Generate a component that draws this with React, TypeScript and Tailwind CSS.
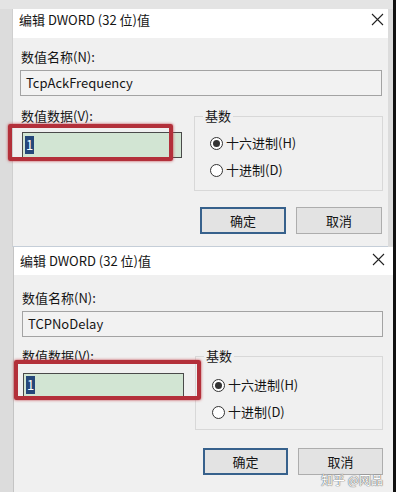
import React from "react";

function CloseX() {
  return (
    <svg width="13" height="13" viewBox="0 0 13 13" className="block">
      <path d="M1 1 L12 12 M12 1 L1 12" stroke="#222" strokeWidth="1.1" fill="none" />
    </svg>
  );
}

function Radio({ checked, label }: { checked?: boolean; label: string }) {
  return (
    <div className="flex items-center h-[20px]">
      <div className="w-[13px] h-[13px] rounded-full border border-[#333] bg-white flex items-center justify-center shrink-0">
        {checked && <div className="w-[7px] h-[7px] rounded-full bg-[#333]" />}
      </div>
      <span className="ml-[3px] leading-[20px]">{label}</span>
    </div>
  );
}

export default function App() {
  return (
    <div className="w-[396px] h-[492px] overflow-hidden bg-[#dcdcdc] flex font-['Noto_Sans_CJK_SC','Noto_Sans',sans-serif] text-[13px] text-[#151515]">
      <div className="flex-1 flex flex-col">
        <div className="h-[9px] shrink-0 bg-[#e4e4e4]" />

        {/* Dialog 1 */}
        <div className="relative ml-[12px] w-[376px] h-[238px] shrink-0 bg-[#f0f0f0] flex flex-col border-l border-[#cfcfcf] border-b border-b-[#c5ced8]">
          <div className="h-[29px] bg-white flex items-start justify-between pl-[6px] pr-[4px] shrink-0">
            <span className="leading-[20px] pt-[1px]">编辑 DWORD (32 位)值</span>
            <div className="pt-[4px]"><CloseX /></div>
          </div>
          <div className="pl-[8px] pt-[9px] leading-[20px]">数值名称(N):</div>
          <div className="mt-[3px] ml-[7px] w-[362px] h-[26px] border border-[#a3a3a3] bg-[#f2f2f2] flex items-center pl-[5px]">
            TcpAckFrequency
          </div>
          <div className="mt-[10px] flex">
            <div className="ml-[8px] w-[161px] flex flex-col">
              <div className="leading-[20px]">数值数据(V):</div>
              <div className="mt-[6px] ml-[1px] w-[160px] h-[26px] border border-[#4a4a4a] bg-[#d2e5d3] flex items-center pl-[2px]">
                <span className="bg-[#25477a] text-white leading-[18px] px-[1px]">1</span>
              </div>
            </div>
            <fieldset className="ml-[12px] w-[189px] h-[85px] border border-[#d8d8d8] pl-[15px]">
              <legend className="ml-[-7px] px-[2px] leading-[20px]">基数</legend>
              <div className="mt-[7px] flex flex-col gap-[7px]">
                <Radio checked label="十六进制(H)" />
                <Radio label="十进制(D)" />
              </div>
            </fieldset>
          </div>
          <div className="mt-[16px] flex justify-end gap-[10px] pr-[6px]">
            <div className="w-[86px] h-[27px] border-2 border-[#37618c] bg-[#e3e3e3] flex items-center justify-center">确定</div>
            <div className="w-[86px] h-[27px] border border-[#adadad] bg-[#e3e3e3] flex items-center justify-center">取消</div>
          </div>

          <div className="absolute left-[-5px] top-[115px] w-[165px] h-[37px] border-[4px] border-[#b3303a] rounded-[2px] shadow-[0_0_3px_#c04048]" />
        </div>

        {/* Dialog 2 */}
        <div className="relative ml-[13px] flex-1 bg-[#f0f0f0] flex flex-col border-l border-[#c4c4c4]">
          <div className="h-[28px] bg-white flex items-start justify-between pl-[6px] pr-[8px] shrink-0">
            <span className="leading-[20px] pt-[4px]">编辑 DWORD (32 位)值</span>
            <div className="pt-[6px]"><CloseX /></div>
          </div>
          <div className="pl-[8px] pt-[13px] leading-[20px]">数值名称(N):</div>
          <div className="mt-[3px] ml-[8px] w-[361px] h-[26px] border border-[#a3a3a3] bg-[#f2f2f2] flex items-center pl-[5px]">
            TCPNoDelay
          </div>
          <div className="mt-[9px] flex">
            <div className="ml-[8px] w-[161px] flex flex-col">
              <div className="leading-[20px]">数值数据(V):</div>
              <div className="mt-[7px] ml-[1px] w-[161px] h-[24px] border border-[#4a4a4a] bg-[#d2e5d3] flex items-center pl-[2px]">
                <span className="bg-[#25477a] text-white leading-[18px] px-[1px]">1</span>
              </div>
            </div>
            <fieldset className="ml-[12px] w-[188px] h-[84px] border border-[#d8d8d8] pl-[16px]">
              <legend className="ml-[-8px] px-[2px] leading-[20px]">基数</legend>
              <div className="mt-[9px] flex flex-col gap-[7px]">
                <Radio checked label="十六进制(H)" />
                <Radio label="十进制(D)" />
              </div>
            </fieldset>
          </div>
          <div className="mt-[18px] flex justify-end gap-[10px] pr-[10px]">
            <div className="w-[85px] h-[27px] border-2 border-[#37618c] bg-[#e3e3e3] flex items-center justify-center">确定</div>
            <div className="w-[85px] h-[27px] border border-[#adadad] bg-[#e3e3e3] flex items-center justify-center">取消</div>
          </div>

          <div className="absolute left-[0px] top-[113px] w-[187px] h-[40px] border-[4px] border-[#b3303a] rounded-[2px] shadow-[0_0_3px_#c04048]" />
          <div className="absolute right-[10px] top-[226px] text-[12px] leading-[14px] text-white [text-shadow:0_0_1px_#555,0_0_1px_#555]">知乎 @网品</div>
        </div>
      </div>
      <div className="w-[3px] shrink-0 bg-[#111]" />
    </div>
  );
}
